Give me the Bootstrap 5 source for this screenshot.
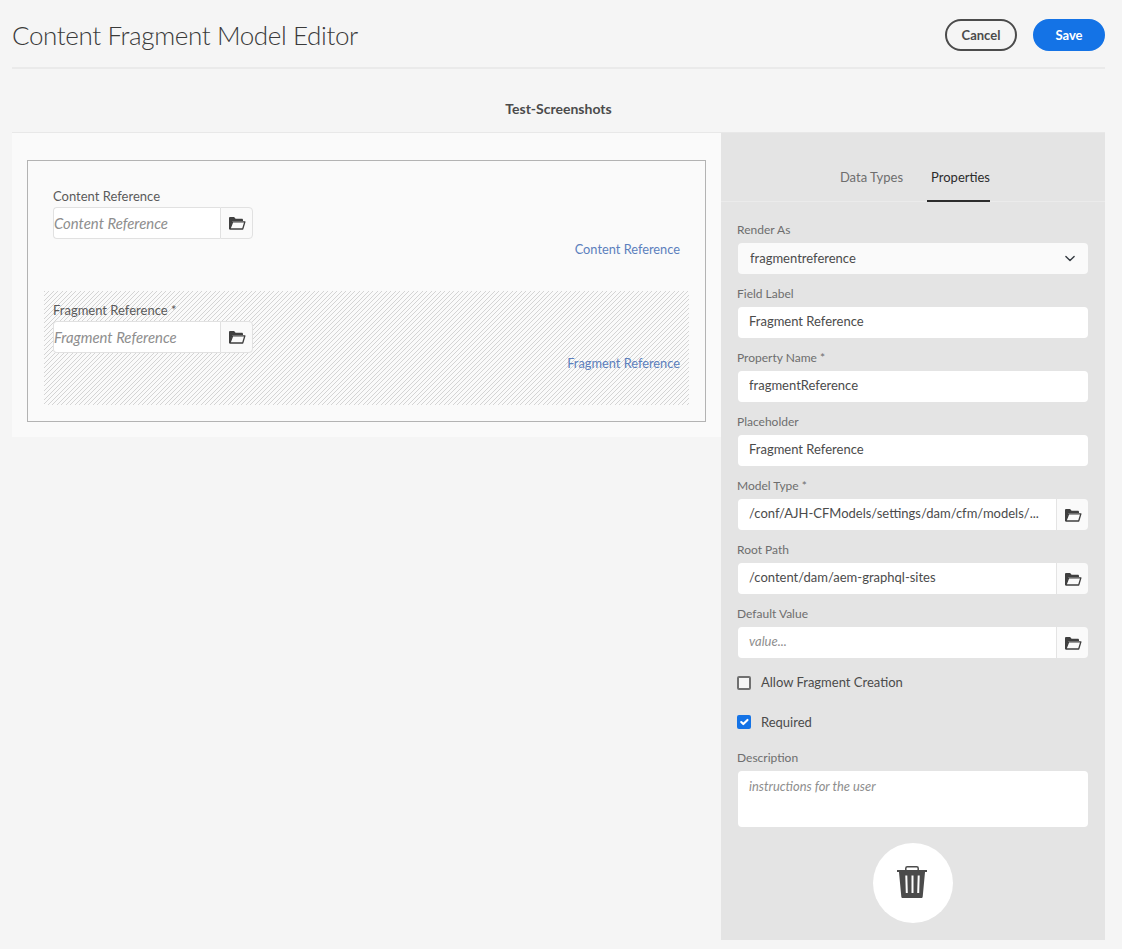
<!DOCTYPE html>
<html lang="en">
<head>
    <meta charset="UTF-8">
    <meta name="viewport" content="width=device-width, initial-scale=1.0">
    <title>Content Fragment Model Editor</title>
    <link href="https://cdn.jsdelivr.net/npm/bootstrap@5.3.0/dist/css/bootstrap.min.css" rel="stylesheet">
    <style>
        body { background: #f5f5f5; color: #4b4b4b; font-family: "Lato", "Noto Sans", sans-serif; font-size: 14px; height: 949px; overflow: hidden; }
        .page-wrap { padding: 0 17px 0 12px; }
        .editor-head { height: 69px; padding-top: 3px; border-bottom: 2px solid #eaeaea; }
        .editor-title { font-size: 26px; font-weight: 300; color: #3a3a3a; margin: 0; line-height: 36px; letter-spacing: -.38px; }
        .pill-btn { width: 72px; height: 32px; padding: 0; border-radius: 16px; font-size: 13px; font-weight: 700; line-height: 28px; }
        .pill-cancel { border: 2px solid #4b4b4b; color: #4b4b4b; background: transparent; }
        .pill-save, .pill-save:hover { border: 2px solid #1473e6; background: #1473e6; color: #fff; }
        .model-name { height: 63px; font-weight: 700; line-height: 80px; text-align: center; font-size: 14px; color: #4b4b4b; }
        .editor-body { border-top: 1px solid #e8e8e8; }
        .canvas-side { width: 709px; flex: none; }
        .canvas-sheet { background: #fafafa; height: 304px; padding: 27px 15px 15px; }
        .canvas-box { height: 262px; border: 1px solid #b3b3b3; padding: 16px 16px 0 16px; }
        .frag-row { height: 114px; padding: 11px 9px 0; }
        .frag-sel { background: repeating-linear-gradient(135deg, #d4d4d4 0, #d4d4d4 .9px, transparent .9px, transparent 3.182px); }
        .frag-label { font-size: 13px; line-height: 16px; margin-bottom: 3px; color: #5a5a5a; }
        .frag-field { width: 200px; height: 32px; }
        .frag-input { flex: 1; min-width: 0; background: #fff; border: 1px solid #e1e1e1; border-right: 0; border-radius: 4px 0 0 4px; font-style: italic; font-size: 14.9px; color: #8e8e8e; padding-left: 0; line-height: 30px; }
        .folder-btn { width: 33px; background: #fafafa; border: 1px solid #e1e1e1; border-radius: 0 4px 4px 0; padding: 0; margin-left: 0; display: flex; align-items: center; justify-content: center; }
        .frag-link { color: #5c7fbd; font-size: 12.8px; text-align: right; line-height: 16px; margin-top: 2px; padding-right: 0; }
        .side-panel { width: 384px; flex: none; background: #e4e4e4; height: 807px; }
        .side-tabs { height: 69px; border-bottom: 1px solid #ebebeb; padding-right: 115px; justify-content: flex-end; gap: 24px; margin-bottom: 0; }
        .side-tab { line-height: 16px; padding-top: 36px; height: 69px; color: #6e6e6e; font-size: 13px; }
        .side-tab-on { color: #2c2c2c; border-bottom: 2px solid #2c2c2c; padding-left: 4px; }
        .side-form { padding: 20px 16px 0 16px; }
        .side-label { font-size: 12px; line-height: 16px; margin: 0 0 5px 0; color: #6e6e6e; display: block; }
        .side-group { margin-bottom: 12px; }
        .side-box { margin: 0 1px; }
        .side-group .form-control, .side-group .form-select { height: 31px; min-height: 31px; border: 0; border-radius: 4px; font-size: 13px; color: #4b4b4b; padding: 0 11px 3px; background-color: #fff; box-shadow: none; }
        .side-group .form-select { background-color: #fafafa; background-position: right 11px center; background-size: 14px 11px; padding: 0 12px; }
        .side-group .form-control::placeholder, .side-area::placeholder { color: #8e8e8e; font-style: italic; opacity: 1; }
        .side-group .folder-btn { width: 32px; height: 31px; border: 0; border-left: 1px solid #e4e4e4; border-radius: 0 4px 4px 0; }
        .side-check { margin: 0; padding: 0; display: flex; align-items: center; min-height: 16px; gap: 10px; }
        .side-check .form-check-input { margin: 0; float: none; width: 14px; height: 14px; border: 2px solid #707070; border-radius: 2px; background-color: #f5f5f5; flex: none; }
        .side-check .form-check-input:checked { background-color: #1473e6; border: 0; }
        .side-check .form-check-label { font-size: 13px; color: #4b4b4b; }
        .side-first { margin-top: 15px; }
        .side-second { margin-top: 20px; }
        .side-desc { margin-top: 18px; margin-bottom: 0; }
        .side-group .side-area { height: 56px; padding: 6px 11px; resize: none; font-size: 12.9px; }
        .trash-btn { width: 80px; height: 80px; border-radius: 50%; background: #fff; border: 0; padding: 0 2px 2px 0; margin: 16px auto 0; display: flex; align-items: center; justify-content: center; }
    </style>
</head>
<body>
    <svg width="0" height="0" class="d-block">
        <symbol id="folder" viewBox="0 0 18 14">
            <path d="M1 13V2.200C1 1.500 1.500 1 2.200 1h3.900l1.500 1.700h6.200c.7 0 1.200.5 1.200 1.200V5H4.600L2.200 13z" fill="#3f3f3f"/>
            <path d="M4.700 5.800h12.200L14.700 13H1.900z" fill="none" stroke="#3f3f3f" stroke-width="1.300" stroke-linejoin="round"/>
        </symbol>
    </svg>
    <div class="page-wrap">
        <div class="editor-head d-flex align-items-center justify-content-between">
            <h1 class="editor-title">Content Fragment Model Editor</h1>
            <div class="d-flex gap-3">
                <button class="btn pill-btn pill-cancel">Cancel</button>
                <button class="btn pill-btn pill-save">Save</button>
            </div>
        </div>
        <div class="model-name">Test-Screenshots</div>
        <div class="editor-body d-flex">
            <div class="canvas-side">
                <div class="canvas-sheet">
                    <div class="canvas-box">
                        <div class="frag-row">
                            <div class="frag-label">Content Reference</div>
                            <div class="frag-field d-flex">
                                <div class="frag-input">Content Reference</div>
                                <button class="folder-btn"><svg width="18" height="14"><use href="#folder"/></svg></button>
                            </div>
                            <div class="frag-link">Content Reference</div>
                        </div>
                        <div class="frag-row frag-sel">
                            <div class="frag-label">Fragment Reference *</div>
                            <div class="frag-field d-flex">
                                <div class="frag-input">Fragment Reference</div>
                                <button class="folder-btn"><svg width="18" height="14"><use href="#folder"/></svg></button>
                            </div>
                            <div class="frag-link">Fragment Reference</div>
                        </div>
                    </div>
                </div>
            </div>
            <div class="side-panel">
                <div class="side-tabs d-flex">
                    <div class="side-tab">Data Types</div>
                    <div class="side-tab side-tab-on">Properties</div>
                </div>
                <div class="side-form">
                    <div class="side-group">
                        <label class="side-label">Render As</label>
                        <div class="side-box"><select class="form-select"><option>fragmentreference</option></select></div>
                    </div>
                    <div class="side-group">
                        <label class="side-label">Field Label</label>
                        <div class="side-box"><input class="form-control" value="Fragment Reference"></div>
                    </div>
                    <div class="side-group">
                        <label class="side-label">Property Name *</label>
                        <div class="side-box"><input class="form-control" value="fragmentReference"></div>
                    </div>
                    <div class="side-group">
                        <label class="side-label">Placeholder</label>
                        <div class="side-box"><input class="form-control" value="Fragment Reference"></div>
                    </div>
                    <div class="side-group">
                        <label class="side-label">Model Type *</label>
                        <div class="side-box d-flex">
                            <input class="form-control rounded-end-0" value="/conf/AJH-CFModels/settings/dam/cfm/models/...">
                            <button class="folder-btn flex-shrink-0"><svg width="18" height="14"><use href="#folder"/></svg></button>
                        </div>
                    </div>
                    <div class="side-group">
                        <label class="side-label">Root Path</label>
                        <div class="side-box d-flex">
                            <input class="form-control rounded-end-0" value="/content/dam/aem-graphql-sites">
                            <button class="folder-btn flex-shrink-0"><svg width="18" height="14"><use href="#folder"/></svg></button>
                        </div>
                    </div>
                    <div class="side-group">
                        <label class="side-label">Default Value</label>
                        <div class="side-box d-flex">
                            <input class="form-control rounded-end-0" placeholder="value...">
                            <button class="folder-btn flex-shrink-0"><svg width="18" height="14"><use href="#folder"/></svg></button>
                        </div>
                    </div>
                    <div class="form-check side-check side-first">
                        <input class="form-check-input" type="checkbox" id="allowCreate">
                        <label class="form-check-label" for="allowCreate">Allow Fragment Creation</label>
                    </div>
                    <div class="form-check side-check side-second">
                        <input class="form-check-input" type="checkbox" id="required" checked>
                        <label class="form-check-label" for="required">Required</label>
                    </div>
                    <div class="side-group side-desc">
                        <label class="side-label">Description</label>
                        <div class="side-box"><textarea class="form-control side-area" placeholder="instructions for the user"></textarea></div>
                    </div>
                    <button class="trash-btn">
                        <svg width="30" height="32" viewBox="0 0 30 32">
                            <path d="M8.800 4.500V2.200C8.800 1.300 9.500.8 10.300.8h9.400c.8 0 1.500.5 1.500 1.400v2.300" fill="none" stroke="#4b4b4b" stroke-width="1.500"/>
                            <path d="M0 4h30v2H0z" fill="#4b4b4b"/>
                            <path d="M2 6h26l-2.300 24.800c-.1.8-.7 1.200-1.400 1.200H5.700c-.7 0-1.300-.4-1.400-1.200z" fill="#4b4b4b"/>
                            <path d="M9.300 9.500l.5 17.500M15.500 9.500v17.500M21.700 9.500l-.5 17.500" stroke="#fff" stroke-width="2" fill="none"/>
                        </svg>
                    </button>
                </div>
            </div>
        </div>
    </div>
    <script src="https://cdn.jsdelivr.net/npm/bootstrap@5.3.0/dist/js/bootstrap.bundle.min.js"></script>
</body>
</html>
